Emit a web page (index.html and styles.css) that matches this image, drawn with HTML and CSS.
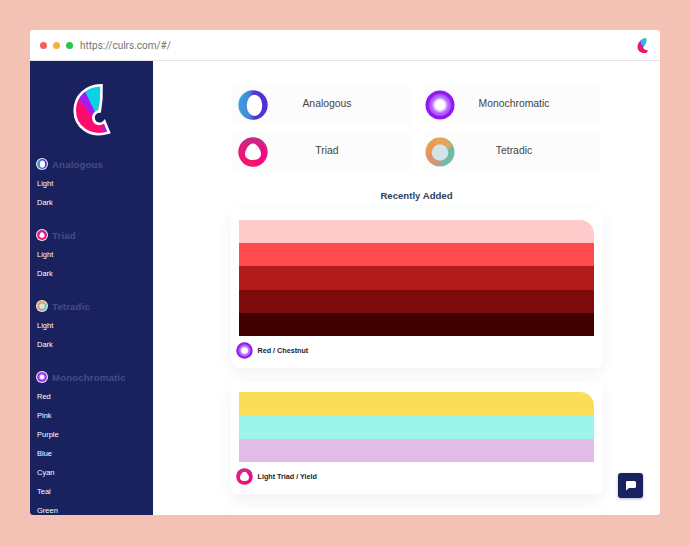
FILE: index.html
```html
<!DOCTYPE html>
<html lang="en">
<head>
<meta charset="utf-8">
<title>Culrs</title>
<link rel="stylesheet" href="styles.css">
</head>
<body>
<svg class="defs" aria-hidden="true">
  <defs>
    <linearGradient id="g-ana"><stop offset="0" stop-color="#35b5d8"/><stop offset=".38" stop-color="#4280db"/><stop offset=".55" stop-color="#5533d0"/><stop offset="1" stop-color="#5231d5"/></linearGradient>
    <linearGradient id="g-tri" x1=".5" y1="0" x2=".4" y2="1"><stop offset="0" stop-color="#c42a86"/><stop offset=".5" stop-color="#e5187c"/><stop offset="1" stop-color="#fb1267"/></linearGradient>
    <linearGradient id="g-tet" x1="0" y1=".15" x2="1" y2=".85"><stop offset="0" stop-color="#eda23b"/><stop offset=".38" stop-color="#e39167"/><stop offset=".68" stop-color="#70b9a8"/><stop offset="1" stop-color="#72bea5"/></linearGradient>
    <radialGradient id="g-mono"><stop offset=".28" stop-color="#fff"/><stop offset=".43" stop-color="#e6c9ff"/><stop offset=".5" stop-color="#c37cff"/><stop offset=".72" stop-color="#a94dfa"/><stop offset=".8" stop-color="#9418f5"/><stop offset="1" stop-color="#9015ed"/></radialGradient>
    <clipPath id="logo-clip"><path d="M31.500 5.200C16 5 4.700 16 4.700 30.500C4.700 47 20 58.500 39 52.500L34.500 41.500A6.200 6.200 0 1 1 29.800 31.500Q32 19 31.500 5.200Z"/></clipPath>
    <symbol id="ana" viewBox="0 0 30 30"><circle cx="15" cy="15" r="14.7" fill="url(#g-ana)"/><path d="M12 3Q5 8 8 18Q10 25 15 28Q6 27 2 20Q-1 8 12 3Z" fill="#448fdc" opacity=".7"/><ellipse cx="16.5" cy="15.4" rx="7.7" ry="10.7" fill="#fff"/></symbol>
    <symbol id="tri" viewBox="0 0 30 30"><circle cx="15" cy="15" r="14.7" fill="url(#g-tri)"/><path d="M23 5Q32 17 23 26L17 28Q24 22 23 5Z" fill="#f50094" opacity=".65"/><path d="M15 6.500C19 6.500 23 13 23 17C23 21 19 23 15 23C11 23 7 21 7 17C7 13 11 6.500 15 6.500Z" fill="#fff"/></symbol>
    <symbol id="mono" viewBox="0 0 30 30"><circle cx="15" cy="15" r="14.5" fill="url(#g-mono)"/></symbol>
    <symbol id="tet" viewBox="0 0 30 30"><circle cx="15" cy="15" r="14.5" fill="url(#g-tet)"/><path d="M10 1.500Q21 -1 27 9L23 12Q19 5 10 7Z" fill="#e6a457"/><path d="M2 20Q6 29 16 29L18 24Q9 24 7 17Z" fill="#e29072" opacity=".75"/><circle cx="15" cy="15.500" r="8.300" fill="#d3e4e6"/></symbol>
    <symbol id="logo" viewBox="0 0 44 60">
      <g clip-path="url(#logo-clip)"><path fill="#ff0a70" d="M0 0h44v60H0z"/><path fill="#a41cf4" d="M7 18L20 0L30 31L22 37Q18 28 7 18ZM32 48L36 43L42 54L36 54Z"/><path fill="#0dd2e6" d="M12 0H40V26L27 36Q21 24 14 9Z"/><path fill="#e5ba49" d="M31 21L30 32L27 31Z"/></g>
    </symbol>
  </defs>
</svg>
<div class="window">
  <header class="titlebar">
    <span class="dot red"></span><span class="dot amber"></span><span class="dot green"></span>
    <span class="url">https://culrs.com/#/</span>
    <svg class="mini-logo" viewBox="0 0 22 30"><path fill="#f5126f" d="M12 2C-4 9-2 31 15 30Q22 30 21 24Q14 25 12 18Z"/><path fill="#9a32d8" d="M4 10L13 3L14 18Q9 19 4 10Z"/><path fill="#28bfe0" d="M7 5Q14 -1 18 0Q22 9 13 17Q8 12 7 5Z"/></svg>
  </header>
  <div class="body">
    <nav class="sidebar">
      <svg class="brand" viewBox="0 0 44 60"><use href="#logo" width="44" height="60"/><path class="logo-edge" d="M31.500 5.200C16 5 4.700 16 4.700 30.500C4.700 47 20 58.500 39 52.500L34.500 41.500A6.200 6.200 0 1 1 29.800 31.500Q32 19 31.500 5.200Z"/></svg>
      <section class="group"><h3><span class="ring"><svg><use href="#ana"/></svg></span>Analogous</h3><a>Light</a><a>Dark</a></section>
      <section class="group"><h3><span class="ring"><svg><use href="#tri"/></svg></span>Triad</h3><a>Light</a><a>Dark</a></section>
      <section class="group"><h3><span class="ring"><svg><use href="#tet"/></svg></span>Tetradic</h3><a>Light</a><a>Dark</a></section>
      <section class="group"><h3><span class="ring"><svg><use href="#mono"/></svg></span>Monochromatic</h3><a>Red</a><a>Pink</a><a>Purple</a><a>Blue</a><a>Cyan</a><a>Teal</a><a>Green</a></section>
    </nav>
    <main class="content">
      <div class="types">
        <div class="type"><svg><use href="#ana"/></svg><span>Analogous</span></div>
        <div class="type"><svg><use href="#mono"/></svg><span>Monochromatic</span></div>
        <div class="type"><svg><use href="#tri"/></svg><span>Triad</span></div>
        <div class="type"><svg><use href="#tet"/></svg><span>Tetradic</span></div>
      </div>
      <h2>Recently Added</h2>
      <article class="card chestnut">
        <div class="stripes"><i class="c1"></i><i class="c2"></i><i class="c3"></i><i class="c4"></i><i class="c5"></i></div>
        <footer><svg><use href="#mono"/></svg><span>Red / Chestnut</span></footer>
      </article>
      <article class="card yield">
        <div class="stripes"><i class="y1"></i><i class="y2"></i><i class="y3"></i></div>
        <footer><svg><use href="#tri"/></svg><span>Light Triad / Yield</span></footer>
      </article>
      <article class="card next"></article>
    </main>
  </div>
  <button class="chat" aria-label="Chat"><svg viewBox="0 0 12 11"><path d="M2 1H9.500Q11 1 11 2.500V6.500Q11 8 9.500 8H4L1 10.500V2Q1 1 2 1Z"/></svg></button>
</div>
</body>
</html>
```

FILE: styles.css
```css
* { box-sizing: border-box; }
body { margin: 0; height: 545px; padding: 30px; overflow: hidden; background: #f3c2b5; font-family: "Liberation Sans", Arial, sans-serif; }
.defs { position: absolute; width: 0; height: 0; }
.window { position: relative; width: 630px; height: 485px; overflow: hidden; background: #fff; border-radius: 3px; }
.titlebar { display: flex; align-items: center; height: 31px; padding: 0 12px 0 10px; border-bottom: 1px solid #e4e6ea; }
.dot { width: 7px; height: 7px; margin-right: 6px; border-radius: 50%; }
.red { background: #f1605d; }
.amber { background: #f2b437; }
.green { background: #27c840; }
.url { margin: 2px 0 0 1px; color: #747474; font: 10px/14px Roboto, sans-serif; }
.mini-logo { width: 11px; height: 15px; margin-left: auto; }
.body { display: flex; height: 454px; }
.sidebar { flex: none; width: 123px; padding: 19px 7px 0; background: #19225f; color: #fff; overflow: hidden; }
.brand { display: block; width: 44px; height: 60px; margin-left: 33px; }
.logo-edge { fill: none; stroke: #fff; stroke-width: 2.6; stroke-linejoin: miter; }
.group { margin-top: 14px; }
.brand + .group { margin-top: 15px; }
.group h3 { display: flex; align-items: center; height: 18px; margin: 0 0 1px -1px; color: #454e82; font-size: 9.6px; font-weight: 700; letter-spacing: .17px; white-space: nowrap; }
.ring { flex: none; width: 12px; height: 12px; margin: -1px 4px 0 0; padding: 1px; border-radius: 50%; background: #e9e8f5; }
.ring svg { display: block; width: 10px; height: 10px; }
.group a { display: block; height: 19px; font-size: 7.5px; line-height: 19px; }
.content { flex: 1; min-width: 0; padding: 25px 57px 0 78px; }
.types { display: grid; grid-template-columns: 180px 176px; gap: 9px 12px; padding-left: 1px; }
.type { display: flex; align-items: center; height: 38px; padding-left: 6px; border-radius: 4px; background: #fcfcfc; }
.type:nth-child(even) { padding-left: 1px; }
.type svg { flex: none; width: 30px; height: 30px; }
.type span { flex: 1; margin: -4px 47px 0 21px; color: #444; font-size: 10.4px; text-align: center; white-space: nowrap; }
.type:nth-child(even) span { margin: -4px 48px 0 21px; }
h2 { margin: 18px 0 6px -1px; color: #2f415c; font-size: 9.6px; line-height: 14px; text-align: center; }
.card { position: relative; width: 372px; margin-bottom: 14px; padding: 11px 9px 0 8px; border-radius: 7px; background: #fff; box-shadow: 0 5px 16px rgba(0, 0, 0, .06); }
.chestnut { height: 159px; }
.yield { height: 112px; padding-top: 10px; }
.next { height: 100px; }
.stripes { display: flex; flex-direction: column; overflow: hidden; border-radius: 0 14px 0 0; }
.chestnut .stripes { height: 116px; }
.yield .stripes { height: 70px; }
.stripes i { flex: 1; }
.c1 { background: #fecaca; }
.c2 { background: #fd4c4b; }
.c3 { background: #b31b1a; }
.c4 { background: #7d0b0b; }
.c5 { background: #400000; }
.y1 { background: #fade57; }
.y2 { background: #9df4e8; }
.y3 { background: #e1bce6; }
.card footer { display: flex; align-items: center; gap: 4.5px; height: 29px; margin-left: -3px; color: #25252b; font-size: 7.2px; font-weight: 700; }
.card footer svg { width: 17px; height: 17px; }
.chat { position: absolute; right: 17px; bottom: 17px; display: grid; place-items: center; width: 25px; height: 25px; padding: 0; border: 0; border-radius: 3px; background: #19225f; box-shadow: 0 1px 3px rgba(25, 34, 95, .35); }
.chat svg { width: 12px; height: 11px; fill: #fff; }
```
